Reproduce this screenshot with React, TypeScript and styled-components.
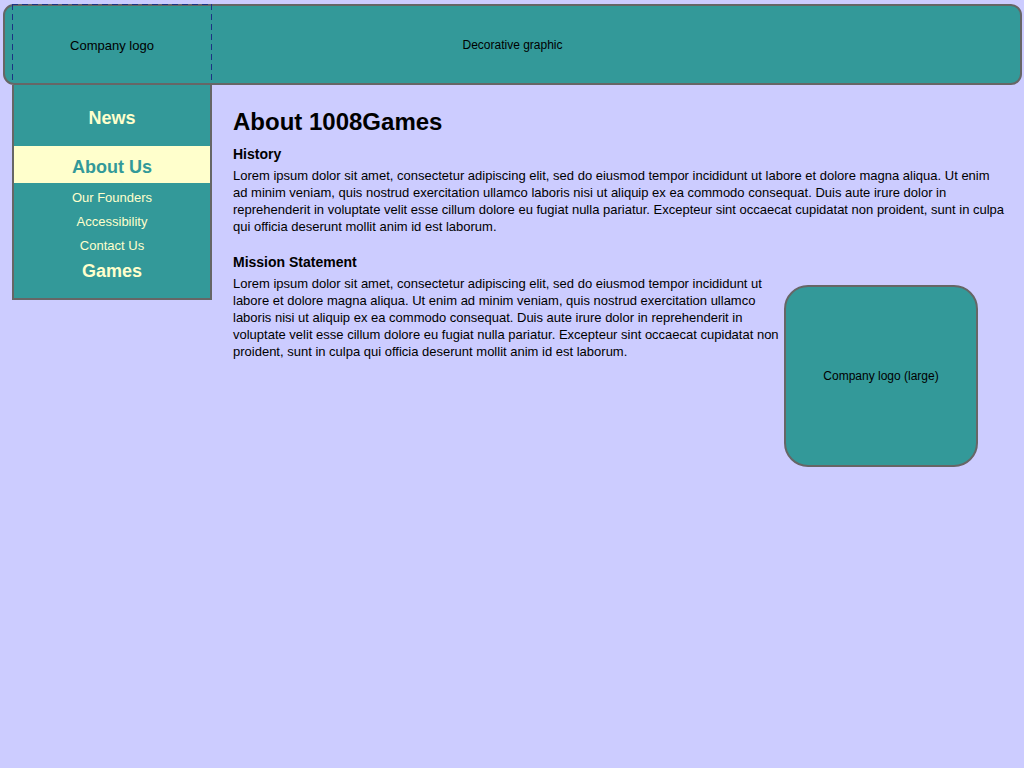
import React from "react";
import styled, { createGlobalStyle } from "styled-components";

const teal = "#339999";
const cream = "#ffffcc";
const edge = "#666666";
const dash = "#1c3484";

const GlobalStyle = createGlobalStyle`
  * { box-sizing: border-box; }
  body {
    margin: 0;
    background: #ccccff;
    color: #000;
    font-family: "Liberation Sans", Arial, sans-serif;
    font-size: 13px;
    line-height: 17px;
  }
`;

const Page = styled.div`
  padding: 4px 2px 16px 3px;
`;

const Banner = styled.header`
  display: grid;
  height: 81px;
  padding-top: 2px;
  border: 2px solid ${edge};
  border-radius: 11px;
  background: ${teal};
`;

const BannerCaption = styled.div`
  grid-area: 1 / 1;
  place-self: center;
  font-size: 12px;
`;

const LogoSlot = styled.div`
  grid-area: 1 / 1;
  display: flex;
  align-items: center;
  justify-content: center;
  width: 200px;
  margin: -4px 0 0 7px;
  padding-top: 4px;
  background:
    repeating-linear-gradient(90deg, ${dash} 0 6px, transparent 6px 10px) top / 100% 1px no-repeat,
    repeating-linear-gradient(${dash} 0 6px, transparent 6px 10px) left / 1px 100% no-repeat,
    repeating-linear-gradient(${dash} 0 6px, transparent 6px 10px) right / 1px 100% no-repeat;
`;

const Body = styled.div`
  display: flex;
  align-items: flex-start;
  gap: 21px;
  padding-left: 9px;
`;

const Nav = styled.nav`
  flex: none;
  width: 200px;
  padding: 20px 0 14px;
  border: 2px solid ${edge};
  border-top: 0;
  background: ${teal};
  text-align: center;
`;

const NavList = styled.ul`
  margin: 0;
  padding: 0;
  list-style: none;
`;

const NavLink = styled.a<{ $spaced?: boolean; $active?: boolean }>`
  display: block;
  margin-bottom: ${(p) => (p.$spaced ? "15px" : "0")};
  padding: ${(p) => (p.$active ? "8px 0 3px" : "0")};
  background: ${(p) => (p.$active ? cream : "transparent")};
  color: ${(p) => (p.$active ? teal : cream)};
  font-size: 18px;
  font-weight: bold;
  line-height: 26px;
  text-decoration: none;
`;

const SubLink = styled.a`
  display: block;
  color: ${cream};
  line-height: 24px;
  text-decoration: none;
`;

const SubList = styled(NavList)`
  padding: 3px 0 0;
`;

const Main = styled.main`
  flex: 1;
  min-width: 0;
  padding: 21px 16px 0 0;
`;

const Title = styled.h1`
  margin: 0 0 8px;
  font-size: 24px;
  line-height: 32px;
`;

const Section = styled.section`
  margin-bottom: 19px;
`;

const Heading = styled.h2`
  margin: 0 0 4px;
  font-size: 14px;
  line-height: 17px;
`;

const Text = styled.p`
  margin: 0;
`;

const Split = styled.div`
  display: flex;
  align-items: flex-start;
  gap: 3px;
  padding-right: 28px;

  ${Text} { flex: 1; }
`;

const LargeLogo = styled.div`
  display: flex;
  flex: none;
  align-items: center;
  justify-content: center;
  width: 194px;
  height: 182px;
  margin-top: 10px;
  border: 2px solid ${edge};
  border-radius: 24px;
  background: ${teal};
  font-size: 12px;
`;

const lorem =
  "Lorem ipsum dolor sit amet, consectetur adipiscing elit, sed do eiusmod tempor incididunt ut labore et dolore magna aliqua. Ut enim ad minim veniam, quis nostrud exercitation ullamco laboris nisi ut aliquip ex ea commodo consequat. Duis aute irure dolor in reprehenderit in voluptate velit esse cillum dolore eu fugiat nulla pariatur. Excepteur sint occaecat cupidatat non proident, sunt in culpa qui officia deserunt mollit anim id est laborum.";

export default function App() {
  return (
    <Page>
      <GlobalStyle />
      <Banner>
        <LogoSlot>Company logo</LogoSlot>
        <BannerCaption>Decorative graphic</BannerCaption>
      </Banner>
      <Body>
        <Nav>
          <NavList>
            <li><NavLink href="#news" $spaced>News</NavLink></li>
            <li>
              <NavLink href="#about" $active aria-current="page">About Us</NavLink>
              <SubList>
                <li><SubLink href="#founders">Our Founders</SubLink></li>
                <li><SubLink href="#accessibility">Accessibility</SubLink></li>
                <li><SubLink href="#contact">Contact Us</SubLink></li>
              </SubList>
            </li>
            <li><NavLink href="#games">Games</NavLink></li>
          </NavList>
        </Nav>
        <Main>
          <Title>About 1008Games</Title>
          <Section>
            <Heading>History</Heading>
            <Text>{lorem}</Text>
          </Section>
          <Section>
            <Heading>Mission Statement</Heading>
            <Split>
              <Text>{lorem}</Text>
              <LargeLogo>Company logo (large)</LargeLogo>
            </Split>
          </Section>
        </Main>
      </Body>
    </Page>
  );
}
